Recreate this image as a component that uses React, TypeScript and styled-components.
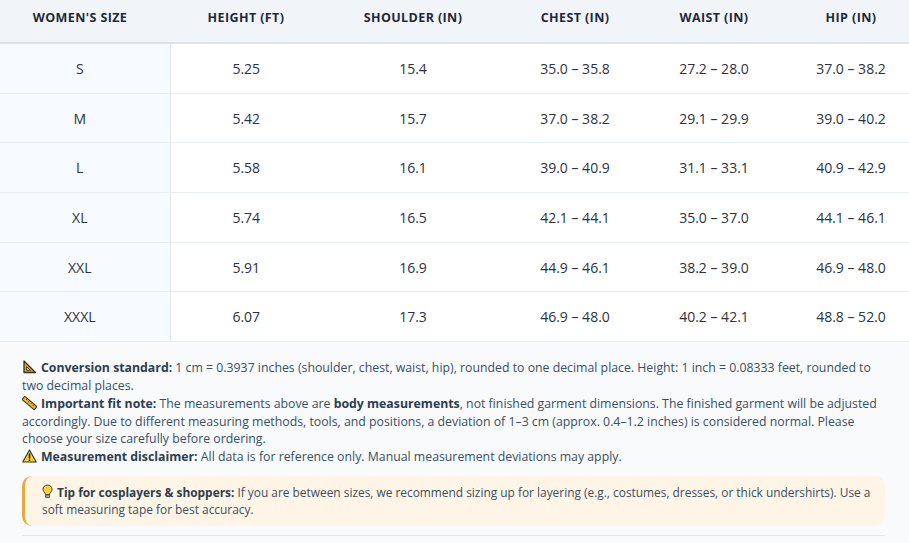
import React from "react";
import styled, { createGlobalStyle } from "styled-components";

const GlobalStyle = createGlobalStyle`
  html, body {
    margin: 0;
    padding: 0;
    background: #f8fafc;
    font-family: "Open Sans", "Noto Sans", "Liberation Sans", sans-serif;
  }
`;

type Row = {
  size: string;
  height: string;
  shoulder: string;
  chest: string;
  waist: string;
  hip: string;
};

const rows: Row[] = [
  { size: "S", height: "5.25", shoulder: "15.4", chest: "35.0 – 35.8", waist: "27.2 – 28.0", hip: "37.0 – 38.2" },
  { size: "M", height: "5.42", shoulder: "15.7", chest: "37.0 – 38.2", waist: "29.1 – 29.9", hip: "39.0 – 40.2" },
  { size: "L", height: "5.58", shoulder: "16.1", chest: "39.0 – 40.9", waist: "31.1 – 33.1", hip: "40.9 – 42.9" },
  { size: "XL", height: "5.74", shoulder: "16.5", chest: "42.1 – 44.1", waist: "35.0 – 37.0", hip: "44.1 – 46.1" },
  { size: "XXL", height: "5.91", shoulder: "16.9", chest: "44.9 – 46.1", waist: "38.2 – 39.0", hip: "46.9 – 48.0" },
  { size: "XXXL", height: "6.07", shoulder: "17.3", chest: "46.9 – 48.0", waist: "40.2 – 42.1", hip: "48.8 – 52.0" },
];

// column widths measured from the picture
const columns = [
  { label: "Women's Size", width: 170 },
  { label: "Height (ft)", width: 152 },
  { label: "Shoulder (in)", width: 182 },
  { label: "Chest (in)", width: 142 },
  { label: "Waist (in)", width: 136 },
  { label: "Hip (in)", width: 127 },
];

// 📐
const TriangleRuler = () => (
  <svg width="15" height="14" viewBox="0 0 15 14">
    <path d="M2 1 L13.5 12.5 L2 12.5 Z" fill="#e0a526" stroke="#3b3020" strokeWidth="1.3" strokeLinejoin="round" />
    <path d="M4.6 6.8 L8.3 10.3 L4.6 10.3 Z" fill="#f8fafc" stroke="#3b3020" strokeWidth="1" />
  </svg>
);

// 📏
const StraightRuler = () => (
  <svg width="15" height="14" viewBox="0 0 15 14">
    <g transform="rotate(40 7.5 7)">
      <rect x="-0.5" y="5" width="16" height="4.2" rx="0.6" fill="#e8b33a" stroke="#3b3020" strokeWidth="1" />
      <path d="M3 5 V6.8 M6 5 V7.3 M9 5 V6.8 M12 5 V7.3" stroke="#3b3020" strokeWidth="0.8" />
    </g>
  </svg>
);

// ⚠️
const Warning = () => (
  <svg width="15" height="14" viewBox="0 0 15 14">
    <path d="M7.5 1 L14.2 13 L0.8 13 Z" fill="#f5d327" stroke="#2e2e2e" strokeWidth="1.1" strokeLinejoin="round" />
    <path d="M7.5 5 V9.2" stroke="#1f1f1f" strokeWidth="1.5" strokeLinecap="round" />
    <circle cx="7.5" cy="11.1" r="0.85" fill="#1f1f1f" />
  </svg>
);

// 💡
const Bulb = () => (
  <svg width="11" height="15" viewBox="0 0 11 15">
    <path
      d="M5.5 1 C2.8 1 1 2.9 1 5.2 C1 7 2.2 8 3 9.2 C3.4 9.8 3.5 10.3 3.5 10.8 L7.5 10.8 C7.5 10.3 7.6 9.8 8 9.2 C8.8 8 10 7 10 5.2 C10 2.9 8.2 1 5.5 1 Z"
      fill="#f7d04a"
      stroke="#4a3d1c"
      strokeWidth="1"
    />
    <rect x="3.5" y="11" width="4" height="2.6" rx="0.6" fill="#9aa3ad" stroke="#4a3d1c" strokeWidth="0.8" />
  </svg>
);

const App: React.FC = () => {
  return (
    <Page>
      <GlobalStyle />
      <SizeTable>
        <colgroup>
          {columns.map((c) => (
            <col key={c.label} style={{ width: c.width }} />
          ))}
        </colgroup>
        <thead>
          <tr>
            {columns.map((c, i) => (
              <HeadCell key={c.label} $first={i === 0} $last={i === columns.length - 1}>
                {c.label}
              </HeadCell>
            ))}
          </tr>
        </thead>
        <tbody>
          {rows.map((r) => (
            <tr key={r.size}>
              <SizeCell>{r.size}</SizeCell>
              <Cell>{r.height}</Cell>
              <Cell>{r.shoulder}</Cell>
              <Cell>{r.chest}</Cell>
              <Cell>{r.waist}</Cell>
              <Cell $last>{r.hip}</Cell>
            </tr>
          ))}
        </tbody>
      </SizeTable>

      <Notes>
        <Note>
          <Icon>
            <TriangleRuler />
          </Icon>
          <Label>Conversion standard:</Label> 1 cm = 0.3937 inches (shoulder, chest, waist, hip), rounded to one
          decimal place. Height: 1 inch = 0.08333 feet, rounded to two decimal places.
        </Note>
        <Note>
          <Icon>
            <StraightRuler />
          </Icon>
          <Label>Important fit note:</Label> The measurements above are <Label>body measurements</Label>, not finished
          garment dimensions. The finished garment will be adjusted accordingly. Due to different measuring methods,
          tools, and positions, a deviation of 1–3 cm (approx. 0.4–1.2 inches) is considered normal. Please choose your
          size carefully before ordering.
        </Note>
        <Note>
          <Icon>
            <Warning />
          </Icon>
          <Label>Measurement disclaimer:</Label> All data is for reference only. Manual measurement deviations may
          apply.
        </Note>

        <TipBox>
          <Icon>
            <Bulb />
          </Icon>
          <Label>Tip for cosplayers &amp; shoppers:</Label> If you are between sizes, we recommend sizing up for
          layering (e.g., costumes, dresses, or thick undershirts). Use a soft measuring tape for best accuracy.
        </TipBox>

        <Divider />
      </Notes>
    </Page>
  );
};

export default App;

// 전체 페이지
const Page = styled.div`
  width: 909px;
  min-height: 543px;
  background: #f8fafc;
`;

// -------------------------------------------------------------------------------------------------------
// 사이즈 표
const SizeTable = styled.table`
  width: 909px;
  border-collapse: collapse;
  table-layout: fixed;
  background: #ffffff;
`;

const HeadCell = styled.th<{ $first?: boolean; $last?: boolean }>`
  height: 43px;
  box-sizing: border-box;
  padding: 0 ${(p) => (p.$first ? "10px" : "0")} 8px ${(p) => (p.$last ? "11px" : "0")};
  background: #f1f5f9;
  border-bottom: 2px solid #dce3eb;
  color: #1e293b;
  font-size: 12.5px;
  font-weight: 700;
  letter-spacing: 0.4px;
  text-transform: uppercase;
  text-align: center;
  white-space: nowrap;
`;

const Cell = styled.td<{ $last?: boolean }>`
  height: 48.7px;
  padding: 0 0 0 ${(p) => (p.$last ? "11px" : "0")};
  border-bottom: 1px solid #e9eef3;
  color: #2b3340;
  font-size: 14px;
  text-align: center;
  white-space: nowrap;
`;

// 첫 번째 열 (사이즈)
const SizeCell = styled(Cell)`
  padding-right: 10px;
  background: #f7fbff;
  border-right: 1px solid #e2e8f0;
`;
// -------------------------------------------------------------------------------------------------------

// -------------------------------------------------------------------------------------------------------
// 안내 문구
const Notes = styled.div`
  padding: 17px 24px 6px 22px;
  background: #f8fafc;
`;

const Note = styled.p`
  margin: 0;
  color: #3a4f63;
  font-size: 12.3px;
  line-height: 17.8px;
`;

const Label = styled.strong`
  color: #2c3e50;
  font-weight: 700;
`;

const Icon = styled.span`
  display: inline-block;
  margin-right: 4px;
  vertical-align: -2px;
  svg {
    display: block;
  }
`;

// 팁 박스
const TipBox = styled.div`
  margin-top: 10px;
  padding: 8px 10px 8px 17px;
  background: #fef5e7;
  border-left: 3px solid #e9a93a;
  border-radius: 10px;
  color: #3a4f63;
  font-size: 11.9px;
  line-height: 17px;
`;

const Divider = styled.hr`
  margin: 9px 0 0;
  border: none;
  border-top: 1px solid #e2e8f0;
`;
